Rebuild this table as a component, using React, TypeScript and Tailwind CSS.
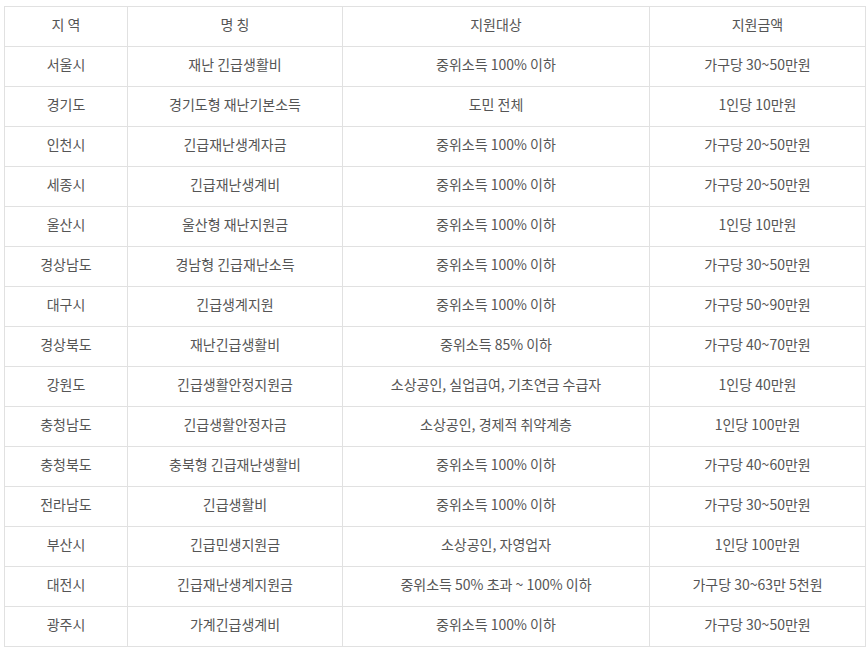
const rows: [string, string, string, string][] = [
  ["서울시", "재난 긴급생활비", "중위소득 100% 이하", "가구당 30~50만원"],
  ["경기도", "경기도형 재난기본소득", "도민 전체", "1인당 10만원"],
  ["인천시", "긴급재난생계자금", "중위소득 100% 이하", "가구당 20~50만원"],
  ["세종시", "긴급재난생계비", "중위소득 100% 이하", "가구당 20~50만원"],
  ["울산시", "울산형 재난지원금", "중위소득 100% 이하", "1인당 10만원"],
  ["경상남도", "경남형 긴급재난소득", "중위소득 100% 이하", "가구당 30~50만원"],
  ["대구시", "긴급생계지원", "중위소득 100% 이하", "가구당 50~90만원"],
  ["경상북도", "재난긴급생활비", "중위소득 85% 이하", "가구당 40~70만원"],
  ["강원도", "긴급생활안정지원금", "소상공인, 실업급여, 기초연금 수급자", "1인당 40만원"],
  ["충청남도", "긴급생활안정자금", "소상공인, 경제적 취약계층", "1인당 100만원"],
  ["충청북도", "충북형 긴급재난생활비", "중위소득 100% 이하", "가구당 40~60만원"],
  ["전라남도", "긴급생활비", "중위소득 100% 이하", "가구당 30~50만원"],
  ["부산시", "긴급민생지원금", "소상공인, 자영업자", "1인당 100만원"],
  ["대전시", "긴급재난생계지원금", "중위소득 50% 초과 ~ 100% 이하", "가구당 30~63만 5천원"],
  ["광주시", "가계긴급생계비", "중위소득 100% 이하", "가구당 30~50만원"],
];

const cell = "h-[40px] border border-[#e1e1e1] p-0 pb-[5px] text-center align-middle leading-[20px]";

export default function App() {
  return (
    <div className="min-h-screen bg-white pl-[4px] pt-[6px] font-['Noto_Sans_CJK_KR','Noto_Sans',sans-serif] text-[14px] text-[#555]">
      <table className="w-[861px] table-fixed border-collapse">
        <colgroup>
          <col className="w-[123px]" />
          <col className="w-[215px]" />
          <col className="w-[307px]" />
          <col className="w-[216px]" />
        </colgroup>
        <thead>
          <tr>
            <th className={`${cell} font-normal`}>지 역</th>
            <th className={`${cell} font-normal`}>명 칭</th>
            <th className={`${cell} font-normal`}>지원대상</th>
            <th className={`${cell} font-normal`}>지원금액</th>
          </tr>
        </thead>
        <tbody>
          {rows.map((r) => (
            <tr key={r[0]}>
              {r.map((v, i) => (
                <td key={i} className={cell}>
                  {v}
                </td>
              ))}
            </tr>
          ))}
        </tbody>
      </table>
    </div>
  );
}
